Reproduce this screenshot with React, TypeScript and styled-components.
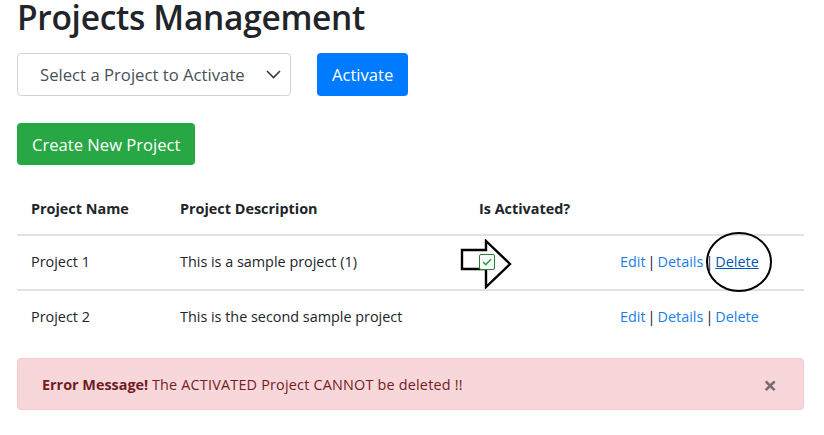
import React from 'react';
import styled, { createGlobalStyle } from 'styled-components';

const GlobalStyle = createGlobalStyle`
	body {
		margin: 0;
		background: #fff;
		font-family: 'Open Sans', 'Noto Sans', sans-serif;
		color: #212529;
	}
`;

const projects = [
	{ name: 'Project 1', description: 'This is a sample project (1)', active: true },
	{ name: 'Project 2', description: 'This is the second sample project', active: false },
];

export default function App() {
	return (
		<>
			<GlobalStyle />
			<Page>
				<Title>Projects Management</Title>
				<ActivateBar>
					<SelectBox role='button'>
						<span>Select a Project to Activate</span>
						<svg width='15' height='9' viewBox='0 0 15 9'>
							<path d='M1 1l6.5 6.5L14 1' fill='none' stroke='#343a40' strokeWidth='1.6' />
						</svg>
					</SelectBox>
					<Button variant='primary'>Activate</Button>
				</ActivateBar>
				<Button variant='success'>Create New Project</Button>
				<Table>
					<colgroup>
						<col style={{ width: 149 }} />
						<col style={{ width: 299 }} />
						<col style={{ width: 141 }} />
						<col style={{ width: 198 }} />
					</colgroup>
					<thead>
						<tr>
							<HeadCell>Project Name</HeadCell>
							<HeadCell>Project Description</HeadCell>
							<HeadCell>Is Activated?</HeadCell>
							<HeadCell />
						</tr>
					</thead>
					<tbody>
						{projects.map(p => (
							<tr key={p.name}>
								<Cell>{p.name}</Cell>
								<Cell>{p.description}</Cell>
								<Cell>
									{p.active && (
										<Marked>
											<PointerArrow width='52' height='50' viewBox='0 0 52 50'>
												<polygon
													points='2,11 26,11 26,2 50,25 26,48 26,30 2,30'
													fill='#fff'
													stroke='#000'
													strokeWidth='2.4'
													strokeLinejoin='miter'
												/>
											</PointerArrow>
											<CheckBox>
												<svg width='10' height='8' viewBox='0 0 10 8'>
													<path d='M1 4l2.8 2.6L9 1.2' fill='none' stroke='#28a745' strokeWidth='1.6' />
												</svg>
											</CheckBox>
										</Marked>
									)}
								</Cell>
								<ActionCell>
									<ActionLink>Edit</ActionLink> | <ActionLink>Details</ActionLink> |{' '}
									{p.active ? (
										<Circled>
											<ActionLink hovered>Delete</ActionLink>
											<Ring width='68' height='62' viewBox='0 0 68 62'>
												<ellipse cx='34' cy='31' rx='32' ry='29' fill='none' stroke='#000' strokeWidth='2' />
											</Ring>
										</Circled>
									) : (
										<ActionLink>Delete</ActionLink>
									)}
								</ActionCell>
							</tr>
						))}
					</tbody>
				</Table>
				<Alert>
					<span>
						<strong>Error Message!</strong> <Message>The ACTIVATED Project CANNOT be deleted !!</Message>
					</span>
					<Close>×</Close>
				</Alert>
			</Page>
		</>
	);
}

const Page = styled.div`
	width: 787px;
	padding: 0 17px;
	display: flex;
	flex-direction: column;
	align-items: flex-start;
`;

const Title = styled.h1`
	margin: 0 0 18px;
	font-size: 33.5px;
	font-weight: 600;
	line-height: 35px;
	color: #212529;
	letter-spacing: -0.3px;
`;

const ActivateBar = styled.div`
	display: flex;
	gap: 26px;
	margin-bottom: 27px;
`;

const SelectBox = styled.div`
	box-sizing: border-box;
	width: 274px;
	height: 43px;
	display: flex;
	align-items: center;
	justify-content: space-between;
	padding: 0 9px 0 22px;
	border: 1px solid #ced4da;
	border-radius: 4px;
	font-size: 16.7px;
	color: #495057;
	background: #fff;
`;

const Button = styled.button<{ variant: 'primary' | 'success' }>`
	box-sizing: border-box;
	height: ${p => (p.variant === 'primary' ? 43 : 42)}px;
	padding: 0 15px;
	border: none;
	border-radius: 4px;
	font-family: inherit;
	font-size: 16.6px;
	color: #fff;
	background: ${p => (p.variant === 'primary' ? '#007bff' : '#28a745')};
`;

const Table = styled.table`
	margin-top: 19px;
	width: 787px;
	table-layout: fixed;
	border-collapse: collapse;
	font-size: 14.4px;
`;

const HeadCell = styled.th`
	text-align: left;
	font-weight: 700;
	padding: 14px 14px;
	line-height: 22px;
	border-bottom: 2px solid #dee2e6;
`;

const Cell = styled.td`
	padding: 15px 14px 16px;
	line-height: 22px;
	border-top: 2px solid #dee2e6;
	white-space: nowrap;
`;

const ActionCell = styled(Cell)`
	word-spacing: -1.7px;
`;

const Marked = styled.span`
	position: relative;
	display: inline-block;
	vertical-align: middle;
	margin-top: -3px;
	width: 16px;
	height: 16px;
`;

const PointerArrow = styled.svg`
	position: absolute;
	left: -19px;
	top: -15px;
`;

const CheckBox = styled.span`
	position: relative;
	box-sizing: border-box;
	display: flex;
	align-items: center;
	justify-content: center;
	width: 16px;
	height: 16px;
	border: 1px solid #2b7a3b;
	border-radius: 2px;
	background: #fff;
`;

const ActionLink = styled.a<{ hovered?: boolean }>`
	color: ${p => (p.hovered ? '#0056b3' : '#1a7ee6')};
	text-decoration: ${p => (p.hovered ? 'underline' : 'none')};
	word-spacing: normal;
	cursor: pointer;
`;

const Circled = styled.span`
	position: relative;
	display: inline-block;
`;

const Ring = styled.svg`
	position: absolute;
	left: calc(50% + 2px);
	top: 50%;
	transform: translate(-50%, -50%);
	pointer-events: none;
`;

const Alert = styled.div`
	box-sizing: border-box;
	margin-top: 14px;
	width: 787px;
	height: 52px;
	display: flex;
	align-items: center;
	justify-content: space-between;
	padding: 0 26px 0 24px;
	background: #f8d7da;
	border: 1px solid #f5c6cb;
	border-radius: 4px;
	color: #721c24;
	font-size: 14.4px;
`;

const Message = styled.span`
	letter-spacing: 0.2px;
`;

const Close = styled.span`
	font-size: 24px;
	font-weight: 700;
	color: #000;
	opacity: 0.5;
	line-height: 1;
	margin-top: 2px;
`;
